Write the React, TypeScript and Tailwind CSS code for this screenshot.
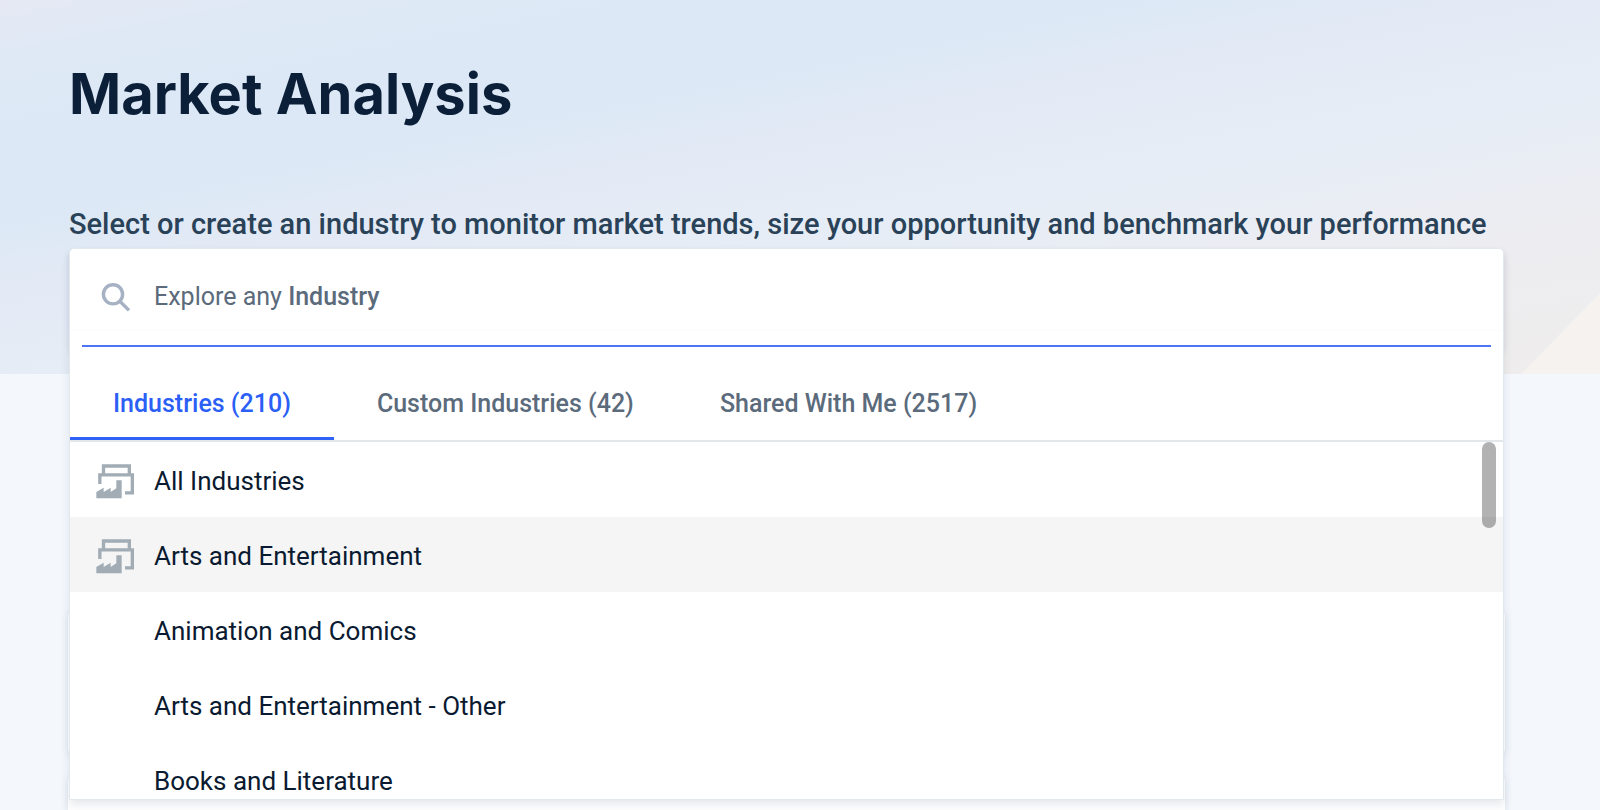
import { useState } from 'react'

interface Tab {
  id: string
  label: string
}

interface Industry {
  name: string
  parent?: boolean
}

const TABS: Tab[] = [
  { id: 'industries', label: 'Industries (210)' },
  { id: 'custom', label: 'Custom Industries (42)' },
  { id: 'shared', label: 'Shared With Me (2517)' },
]

const INDUSTRIES: Industry[] = [
  { name: 'All Industries', parent: true },
  { name: 'Arts and Entertainment', parent: true },
  { name: 'Animation and Comics' },
  { name: 'Arts and Entertainment - Other' },
  { name: 'Books and Literature' },
]

function SearchIcon() {
  return (
    <svg viewBox="0 0 30 30" className="size-[30px] shrink-0" fill="none" stroke="#a6b2c4" strokeWidth="3.4" aria-hidden="true">
      <circle cx="12" cy="12.3" r="9.6" />
      <path d="M18.6 19 28 28.4" />
    </svg>
  )
}

function IndustryIcon() {
  return (
    <svg viewBox="0 0 114 105" className="h-[35px] w-[38px] shrink-0" aria-hidden="true">
      <g fill="none" stroke="#a1acb5" strokeWidth="10">
        <path d="M22.5 32V6H100V32" />
        <path d="M11.5 60V32.5H109V86.5H87" />
      </g>
      <path d="M1 103V84L23 71V84L44 71V84L61 73V49H77V103Z" fill="#a1acb5" />
    </svg>
  )
}

function SearchField() {
  const [query, setQuery] = useState('')
  return (
    <div className="flex h-[82px] items-center gap-[23px] border-b border-[#fcfcfc] pt-[14px] pl-[31px]">
      <SearchIcon />
      <div className="grid grow items-center text-[25px] leading-9">
        {query === '' && (
          <label htmlFor="industry-search" className="pointer-events-none col-start-1 row-start-1 text-[#5b6b7c]">
            Explore any <span className="font-medium">Industry</span>
          </label>
        )}
        <input
          id="industry-search"
          type="text"
          aria-label="Explore any Industry"
          value={query}
          onChange={e => setQuery(e.target.value)}
          className="col-start-1 row-start-1 w-full bg-transparent text-[#092540] outline-none"
        />
      </div>
    </div>
  )
}

function IndustryPicker() {
  const [active, setActive] = useState('industries')
  return (
    <div className="absolute inset-x-0 top-0 z-10 overflow-hidden rounded-t-[5px] border border-[#e3e8ec] bg-white shadow-[0_5px_10px_rgba(9,37,64,0.1)]">
      <SearchField />
      <div className="mx-3 mt-[14px] h-[2px] bg-[#4e74f8]" />
      <div role="tablist" className="mt-5 flex border-b-2 border-[#e3e7ea]">
        {TABS.map(tab => (
          <button
            key={tab.id}
            type="button"
            role="tab"
            aria-selected={tab.id === active}
            onClick={() => setActive(tab.id)}
            className={
              tab.id === active
                ? 'h-[73px] border-b-3 border-[#2f63f8] px-[43px] pt-1 text-[25px] font-medium text-[#2b5ff6]'
                : 'h-[73px] border-b-3 border-transparent px-[43px] pt-1 text-[25px] font-medium text-[#5b6b7c]'
            }
          >
            {tab.label}
          </button>
        ))}
      </div>
      <div className="relative">
        <ul className="max-h-[357px] overflow-y-auto [scrollbar-width:none]">
          {INDUSTRIES.map((item, i) => (
            <li key={item.name}>
              <button
                type="button"
                className={
                  i === 1
                    ? 'flex h-[75px] w-full items-center gap-5 bg-[#f5f5f5] pt-1 pl-[26px] text-left text-[26px] text-[#0a1a30]'
                    : 'flex h-[75px] w-full items-center gap-5 pt-1 pl-[26px] text-left text-[26px] text-[#0a1a30]'
                }
              >
                {item.parent ? <IndustryIcon /> : <span className="w-[38px] shrink-0" />}
                {item.name}
              </button>
            </li>
          ))}
        </ul>
        <div className="absolute top-0 right-[7px] h-[86px] w-[14px] rounded-full bg-black/30" />
      </div>
    </div>
  )
}

export default function App() {
  return (
    <main className="min-h-screen overflow-hidden bg-[#f4f8fd] font-['Roboto',sans-serif]">
      <header className="relative h-[374px] bg-[linear-gradient(169deg,#e6e9f4_0%,#dfe9f5_8%,#dce8f6_20%,#dce8f6_32%,#e3eaf5_43%,#e6edf6_58%,#ededf1_78%,#efedec_100%)] pt-[60px] pr-24 pl-[69px]">
        <div className="absolute right-0 bottom-0 h-[81px] w-[79px] bg-[#f5f2f0] [clip-path:polygon(100%_0,100%_100%,0_100%)]" />
        <h1 className="font-['Inter',sans-serif] text-[56px] leading-[68px] font-bold text-[#0b1f38]">Market Analysis</h1>
        <p className="mt-[76px] text-[29px] leading-10 font-medium whitespace-nowrap text-[#2a4258]">
          Select or create an industry to monitor market trends, size your opportunity and benchmark your performance
        </p>
        <div className="relative mt-1">
          <div className="h-[102px] rounded-md bg-white shadow-[0_4px_6px_rgba(9,37,64,0.08)]" />
          <IndustryPicker />
        </div>
      </header>
      <div className="flex h-[436px] flex-col gap-5 overflow-hidden pt-[236px] pr-[95px] pl-[68px]">
        <section className="h-[145px] shrink-0 rounded-md bg-white shadow-[0_2px_8px_rgba(9,37,64,0.1)]" />
        <section className="h-[145px] shrink-0 rounded-md bg-white shadow-[0_2px_8px_rgba(9,37,64,0.1)]" />
      </div>
    </main>
  )
}
